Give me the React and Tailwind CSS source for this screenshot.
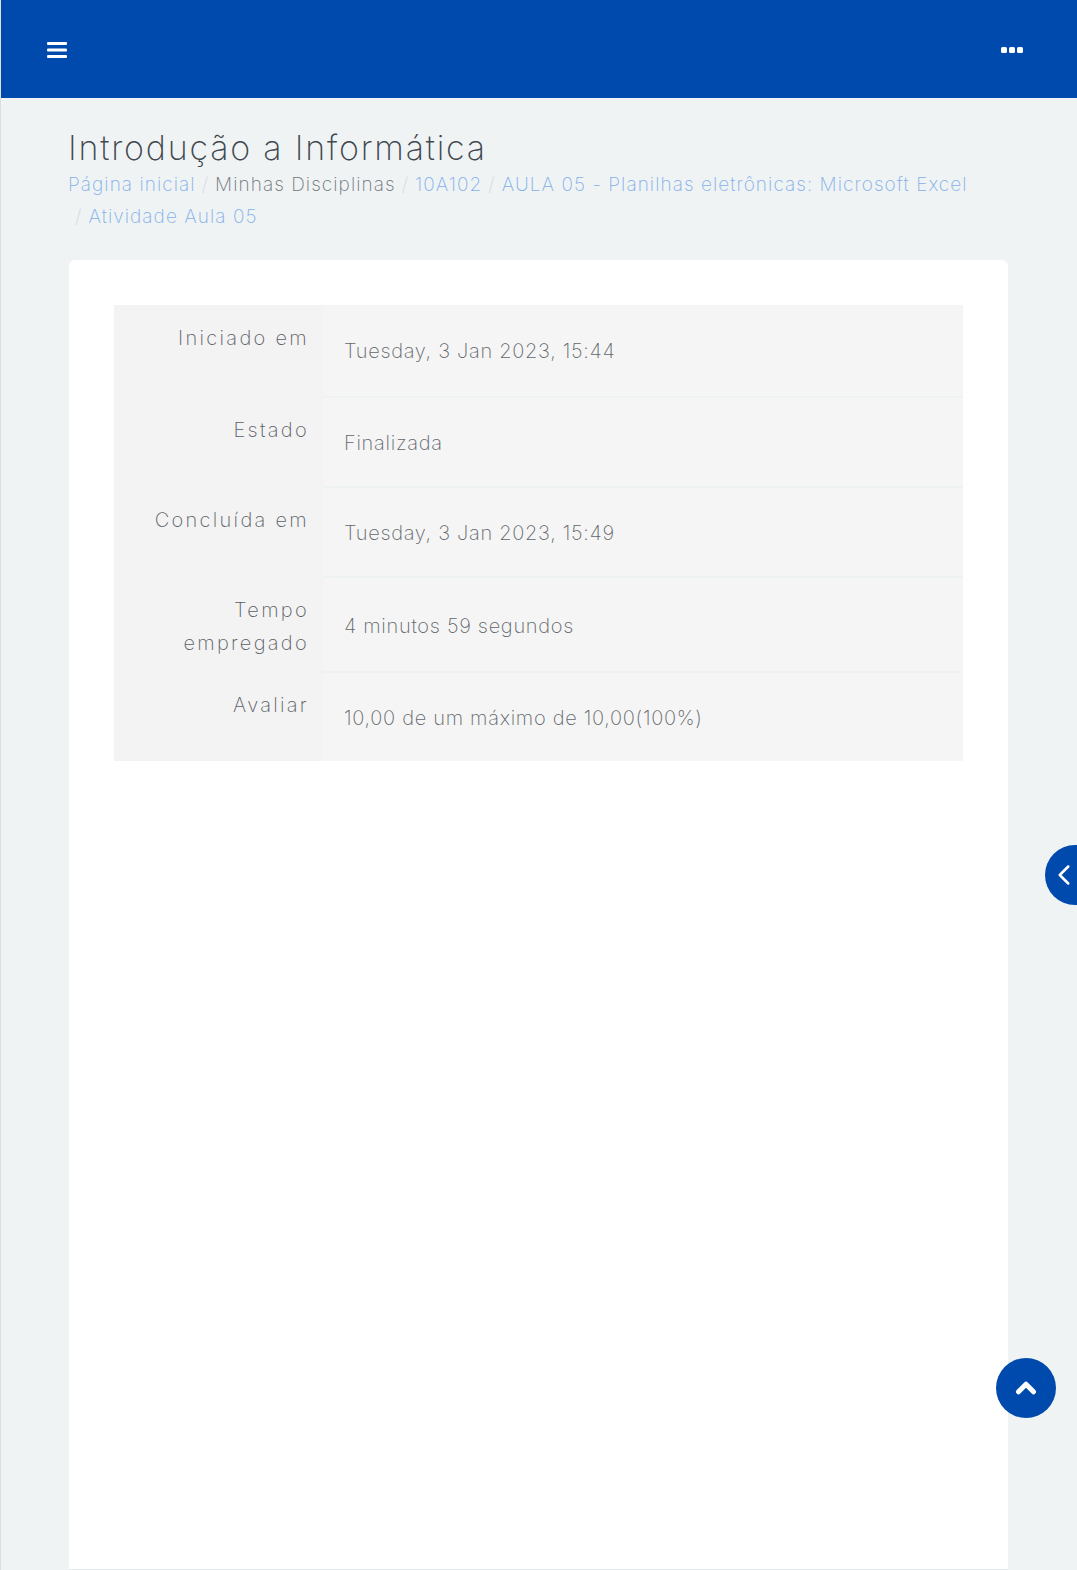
import { ChevronLeft, ChevronUp } from 'lucide-react'

const rows = [
  { label: ['Iniciado em'], value: 'Tuesday, 3 Jan 2023, 15:44' },
  { label: ['Estado'], value: 'Finalizada' },
  { label: ['Concluída em'], value: 'Tuesday, 3 Jan 2023, 15:49' },
  { label: ['Tempo', 'empregado'], value: '4 minutos 59 segundos' },
  { label: ['Avaliar'], value: '10,00 de um máximo de 10,00(100%)' },
]

function Sep() {
  return <span className="mx-[6px] text-[#d3d9de]">/</span>
}

export default function App() {
  return (
    <div
      className="relative min-h-[1570px] border-l border-[#dcdfe2] bg-[#eff3f4] flex flex-col"
      style={{ fontFamily: 'Inter, "Open Sans", sans-serif' }}
    >
      <header className="h-[98px] bg-[#004aad] flex items-center justify-between pl-[46px] pr-[54px]">
        <svg width="20" height="18" viewBox="0 0 20 18" className="mt-[1px]">
          <rect x="0" y="1" width="20" height="3" rx="1" fill="#fff" />
          <rect x="0" y="7.5" width="20" height="3" rx="1" fill="#fff" />
          <rect x="0" y="14" width="20" height="3" rx="1" fill="#fff" />
        </svg>
        <svg width="22" height="8" viewBox="0 0 22 8" className="mt-[2px]">
          <rect x="0" y="1" width="6" height="6" rx="1.5" fill="#fff" />
          <rect x="8" y="1" width="6" height="6" rx="1.5" fill="#fff" />
          <rect x="16" y="1" width="6" height="6" rx="1.5" fill="#fff" />
        </svg>
      </header>

      <div className="pl-[67px] pr-[68px] pt-[30px] flex-1 flex flex-col">
        <h1 className="text-[34px] leading-[40px] font-extralight tracking-[1.8px] text-[#41474e]">
          Introdução a Informática
        </h1>
        <nav className="mt-[1px] text-[19px] leading-[32px] font-extralight tracking-[1.05px] text-[#84b0ea]">
          <span>Página inicial</span>
          <Sep />
          <span className="text-[#70767c]">Minhas Disciplinas</span>
          <Sep />
          <span>10A102</span>
          <Sep />
          <span>AULA 05 - Planilhas eletrônicas: Microsoft Excel</span>
          <br />
          <span className="ml-[1px]">
            <Sep />
          </span>
          <span>Atividade Aula 05</span>
        </nav>

        <main className="mt-[27px] flex-1 bg-white rounded-t-[6px] ml-[1px] w-[939px] px-[45px] pt-[45px] border-b border-[#e6eaec]">
          <table className="w-full border-collapse">
            <tbody>
              {rows.map((r, i) => (
                <tr key={i}>
                  <th className="w-[209px] bg-[#f3f3f3] align-top text-right font-extralight text-[20px] leading-[33px] tracking-[2.3px] text-[#5a6066] pr-[14px] pt-[17px] pb-[12px]">
                    {r.label.map((l, j) => (
                      <div key={j}>{l}</div>
                    ))}
                  </th>
                  <td
                    className={`bg-[#f5f5f5] align-middle pl-[21px] font-extralight text-[20px] leading-[33px] tracking-[0.7px] text-[#62676c] ${i === 0 ? 'pt-[30px] pb-[28px]' : 'pt-[29px] pb-[26px] border-t-2 border-[#eef2f2]'}`}
                  >
                    {r.value}
                  </td>
                </tr>
              ))}
            </tbody>
          </table>
        </main>
      </div>

      <button className="absolute left-[1044px] top-[845px] w-[60px] h-[60px] rounded-full bg-[#004aad] flex items-center pl-[2px]">
        <ChevronLeft size={34} color="#fff" strokeWidth={1.8} />
      </button>
      <button className="absolute left-[995px] top-[1358px] w-[60px] h-[60px] rounded-full bg-[#004aad] flex items-center justify-center">
        <ChevronUp size={30} color="#fff" strokeWidth={4} />
      </button>
    </div>
  )
}
